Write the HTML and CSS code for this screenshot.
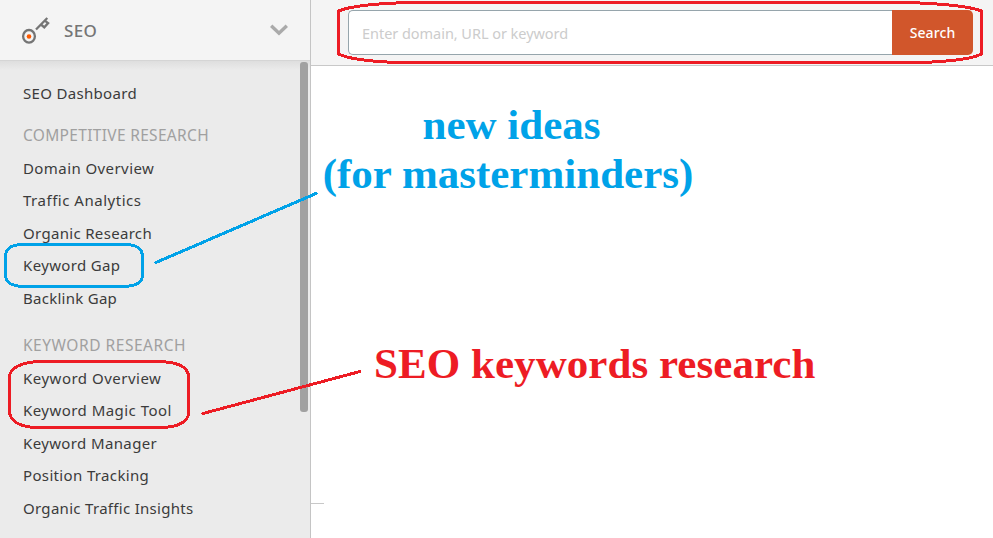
FILE: index.html
```
<!DOCTYPE html>
<html lang="en">
<head>
<meta charset="utf-8">
<title>SEO Dashboard</title>
<link rel="stylesheet" href="styles.css">
</head>
<body>
<div class="app">
  <aside class="sidebar">
    <div class="switcher">
      <svg class="key" width="30" height="32" viewBox="0 0 30 32" fill="none" stroke="#757575">
        <ellipse cx="9" cy="22.300" rx="5.900" ry="6.300" stroke-width="2.300"/>
        <circle cx="9" cy="22.500" r="2.300" fill="#ff5a00" stroke="none"/>
        <path d="M16 15.500 27.300 4M21 10.500l3.300 2.800 3.800-4.200-2.700-2" stroke-width="2.300"/>
      </svg>
      <span class="switcher-name">SEO</span>
      <svg class="chevron" width="18" height="12" viewBox="0 0 18 12" fill="none"><path d="M1.200 1.700 9 9.200l7.800-7.500" stroke="#aaa" stroke-width="3.400"/></svg>
    </div>
    <div class="menu">
      <nav>
        <ul class="first"><li class="dashboard">SEO Dashboard</li></ul>
        <h2 class="competitive">COMPETITIVE RESEARCH</h2>
        <ul class="group">
          <li class="domain">Domain Overview</li>
          <li class="traffic">Traffic Analytics</li>
          <li class="organic">Organic Research</li>
          <li class="gap">Keyword Gap</li>
          <li class="backlink">Backlink Gap</li>
        </ul>
        <h2 class="keyword">KEYWORD RESEARCH</h2>
        <ul>
          <li class="overview">Keyword Overview</li>
          <li class="magic">Keyword Magic Tool</li>
          <li class="manager">Keyword Manager</li>
          <li class="position">Position Tracking</li>
          <li class="insights">Organic Traffic Insights</li>
        </ul>
      </nav>
      <div class="scroll-thumb"></div>
    </div>
  </aside>
  <main>
    <header class="topbar">
      <form class="search">
        <input type="text" placeholder="Enter domain, URL or keyword">
        <button type="button">Search</button>
      </form>
    </header>
    <section class="notes">
      <p class="note-ideas"><span class="ideas-top">new ideas</span><br><span class="ideas-sub">(for masterminders)</span></p>
      <p class="note-seo">SEO keywords research</p>
      <div class="rule"></div>
    </section>
  </main>
</div>
<svg class="marks" width="993" height="538" viewBox="0 0 993 538" fill="none" stroke-width="3" stroke-linecap="round" shape-rendering="crispEdges">
  <g stroke="#ed1c24">
    <path d="M410 2.500H908Q965 4.500 981.500 11V54Q968 61 920 62.500H398Q353 61 338.500 54V11Q355 4 410 2.500Z"/>
    <path d="M42 361.500H156C178 361.500 188.500 367 188.500 377V413C188.500 421 179 427.500 160 427.500H38C20 427.500 9.500 421 9.500 411V377C9.500 369 20 361.500 42 361.500Z"/>
    <path d="M203 413.500 360 371.500"/>
  </g>
  <g stroke="#00a2e8">
    <path d="M23 244.500H125C137 244.500 142.500 249 142.500 257V275C142.500 282 137 286.500 122 286.500H25C12 286.500 5.500 282 5.500 275V257C5.500 249 11 244.500 23 244.500Z"/>
    <path d="M156 262.500 316 193.500"/>
  </g>
</svg>
</body>
</html>
```
FILE: styles.css
```
* { box-sizing: border-box; }
body { margin: 0; font-family: "Noto Sans", sans-serif; background: #fff; }
.app { display: flex; width: 993px; height: 538px; overflow: hidden; }
.sidebar { width: 311px; flex: none; display: flex; flex-direction: column; background: #ebebeb; border-right: 1px solid #c4c4c4; }
.switcher { height: 61px; flex: none; display: flex; align-items: center; padding: 0 22px 0 20px; background: #f4f4f4; border-bottom: 1px solid #d5d5d5; }
.key { margin-top: -1px; }
.switcher-name { margin-left: 14px; font-size: 17px; font-weight: 500; letter-spacing: .4px; color: #757575; }
.chevron { margin-left: auto; }
.menu { flex: 1; min-height: 0; display: flex; justify-content: space-between; padding-right: 2px; background: linear-gradient(#dedede, #ebebeb 9px); }
nav { padding: 15.500px 0 0 23px; white-space: nowrap; }
ul { list-style: none; margin: 0; padding: 0; }
li { height: 32.500px; line-height: 32.500px; font-size: 15px; color: #3b3b3b; }
h2 { margin: 0; height: 32.500px; line-height: 33px; font-size: 15.500px; font-weight: 400; color: #a0a0a0; }
.first { margin-bottom: 10px; }
.group { margin-bottom: 15px; }
.dashboard { letter-spacing: .32px; }
.competitive { letter-spacing: .32px; }
.domain { letter-spacing: .42px; }
.traffic { letter-spacing: .52px; }
.organic { letter-spacing: .32px; }
.gap { letter-spacing: .35px; }
.backlink { letter-spacing: .27px; }
.keyword { letter-spacing: .53px; }
.overview { letter-spacing: .5px; }
.magic { letter-spacing: .46px; }
.manager { letter-spacing: .37px; }
.position { letter-spacing: .35px; }
.insights { letter-spacing: .3px; }
.scroll-thumb { width: 8px; height: 350px; margin-top: 1px; border-radius: 3px; background: #a1a1a1; }
main { flex: 1; min-width: 0; display: flex; flex-direction: column; }
.topbar { height: 66px; flex: none; padding: 10px 20px 0 37px; background: #f4f4f4; border-bottom: 1px solid #c8c8c8; }
.search { display: flex; height: 45px; margin: 0; }
.search input { flex: 1; min-width: 0; padding: 0 0 0 13px; border: 1px solid #96a5ac; border-right: 0; border-radius: 5px 0 0 5px; background: #fff; font: 14.500px "Noto Sans", sans-serif; letter-spacing: -.04px; outline: 0; }
.search input::placeholder { color: #ccc; opacity: 1; }
.search button { width: 81px; padding: 0 0 1px; border: 0; border-radius: 0 5px 5px 0; background: #d1562b; color: #fff; font: 500 14px "Noto Sans", sans-serif; letter-spacing: .1px; }
.notes { flex: 1; display: flex; flex-direction: column; font: bold 43px/49px "Liberation Serif", serif; white-space: nowrap; }
.notes p { margin: 0; }
.notes .note-ideas { width: 394px; margin-top: 34px; text-align: center; color: #00a2e8; }
.ideas-top { padding-left: 7px; }
.notes .note-seo { padding-left: 63px; margin-top: 141px; letter-spacing: .05px; color: #ed1c24; }
.rule { width: 13px; height: 1px; margin-top: 115px; background: #c8c8c8; }
.marks { position: absolute; left: 0; top: 0; pointer-events: none; }
```
